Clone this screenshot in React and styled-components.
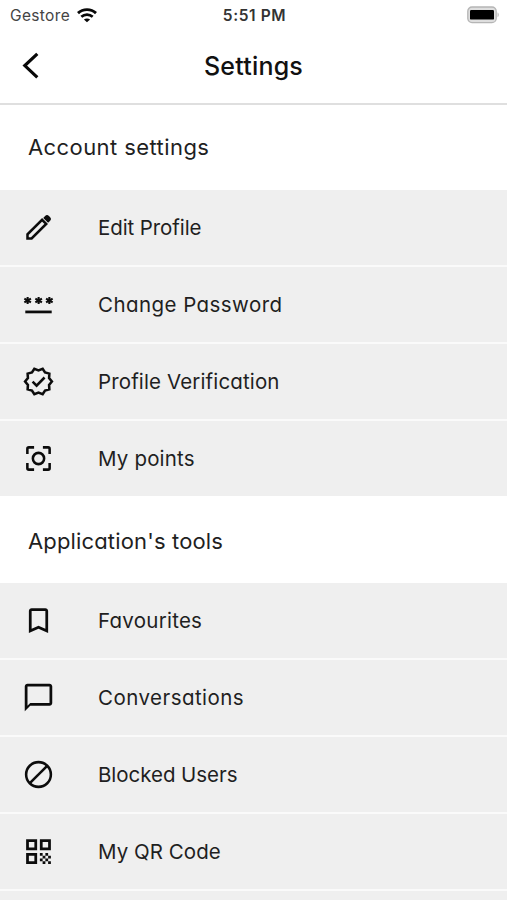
import React from "react";
import styled, { createGlobalStyle } from "styled-components";
import {
  MdBookmarkBorder,
  MdChatBubbleOutline,
  MdQrCode,
} from "react-icons/md";

const GlobalStyle = createGlobalStyle`
  * { box-sizing: border-box; }
  body {
    margin: 0;
    background: #fff;
    overflow: hidden;
  }
`;

const Screen = styled.main`
  width: 507px;
  height: 900px;
  overflow: hidden;
  display: flex;
  flex-direction: column;
  background: #fff;
  color: #1f1f1f;
  font-family: Inter, "Open Sans", sans-serif;
  font-feature-settings: "cv11";
`;

const StatusBar = styled.div`
  flex: none;
  height: 30px;
  padding: 0 8px 0 10px;
  display: grid;
  grid-template-columns: 1fr auto 1fr;
  align-items: center;
  font-size: 15.5px;
  font-feature-settings: normal;
`;

const Carrier = styled.div`
  display: flex;
  align-items: center;
  gap: 7px;
  color: #444;
  letter-spacing: 0.35px;
`;

const Clock = styled.div`
  color: #333;
  font-weight: 600;
  letter-spacing: 0.6px;
`;

const BatterySlot = styled.div`
  display: flex;
  justify-content: flex-end;
  padding-bottom: 1px;
`;

const Header = styled.header`
  flex: none;
  height: 75px;
  padding: 0 20px 2px;
  display: grid;
  grid-template-columns: 60px 1fr 60px;
  align-items: center;
  border-bottom: 2px solid #dfdfdf;
`;

const BackButton = styled.button`
  padding: 0;
  border: 0;
  background: none;
  display: flex;
`;

const Title = styled.h1`
  margin: 0;
  text-align: center;
  font-size: 25px;
  line-height: 36px;
  font-weight: 500;
  color: #111;
  letter-spacing: ${(p) => p.$track}px;
`;

const SectionTitle = styled.h2`
  flex: none;
  margin: 0;
  height: ${(p) => p.$height}px;
  padding: ${(p) => p.$top}px 28px 2px;
  display: flex;
  align-items: center;
  font-size: 22px;
  font-weight: 400;
  letter-spacing: ${(p) => p.$track}px;
`;

const List = styled.div`
  flex: none;
  display: flex;
  flex-direction: column;
  gap: 1.9px;
  background: #fafafa;
`;

const Row = styled.div`
  height: 75px;
  padding-left: 22px;
  display: grid;
  grid-template-columns: 76px 1fr;
  align-items: center;
  background: #efefef;
`;

const IconSlot = styled.span`
  display: flex;
  color: #0c0c0c;
`;

const Label = styled.span`
  padding-top: ${(p) => p.$drop}px;
  font-size: 20.5px;
  line-height: 30px;
  letter-spacing: ${(p) => p.$track}px;
`;

const Wifi = () => (
  <svg width="20" height="15" viewBox="0 0 20 15" fill="none" stroke="#080808">
    <path d="M1 5.1C6 .5 14 .5 19 5.1" strokeWidth="2.9" />
    <path d="M4.3 8.7c3.3-2.9 8.1-2.9 11.4 0" strokeWidth="2.7" />
    <path d="M10 14.3 6.9 11.5c1.7-1.5 4.5-1.5 6.2 0z" fill="#080808" stroke="none" />
  </svg>
);

const Battery = () => (
  <svg width="32" height="18" viewBox="0 0 32 18">
    <rect x="0.8" y="1" width="28.4" height="15.6" rx="4.2" fill="#dedede" stroke="#b5b5b5" strokeWidth="1.3" />
    <rect x="3" y="4" width="24" height="9.6" rx="1.2" fill="#000" />
    <path d="M30.6 6.6v4.6c1.4-.6 1.4-4 0-4.6z" fill="#aaa" />
  </svg>
);

const Back = () => (
  <svg width="22" height="30" viewBox="0 0 22 30" fill="none" stroke="#080808" strokeWidth="3.2">
    <path d="M17.3 2.8 4.8 14.6l12.5 11.8" />
  </svg>
);

const LineIcon = styled.svg.attrs({ width: 33, height: 33, viewBox: "0 0 24 24" })`
  fill: none;
  stroke: currentColor;
  stroke-width: 1.85;
`;

const Pencil = () => (
  <LineIcon>
    <path d="M4 20v-3L14.6 6.4l3 3L7 20z" />
    <path d="m16.1 5 1.2-1.2q.9-.9 1.8 0l1.1 1.1q.9.9 0 1.8L19 7.9z" fill="currentColor" strokeWidth="0.9" />
  </LineIcon>
);

const Blocked = () => (
  <LineIcon>
    <circle cx="12" cy="12" r="9" />
    <path d="M5.7 18.3 18.3 5.7" />
  </LineIcon>
);

const Password = () => (
  <LineIcon>
    {[4.1, 12.1, 19.9].map((x) => (
      <path
        key={x}
        strokeWidth="1.5"
        d={`M${x} 6.5v5.2M${x - 2.4} 7.7l4.8 2.8M${x - 2.4} 10.5l4.8-2.8`}
      />
    ))}
    <path d="M2.4 17.4h19.2" strokeWidth="2" />
  </LineIcon>
);

const POINTS = 10;
const badgeOutline = Array.from({ length: POINTS * 2 }, (_, i) => {
  const radius = i % 2 ? 8.1 : 9.75;
  const angle = (Math.PI * i) / POINTS;
  return `${(12 + radius * Math.cos(angle)).toFixed(2)},${(12 + radius * Math.sin(angle)).toFixed(2)}`;
}).join(" ");

const Verified = () => (
  <LineIcon>
    <polygon points={badgeOutline} />
    <path d="m7.7 12.1 2.9 2.9 5.8-5.9" />
  </LineIcon>
);

const Focus = () => (
  <LineIcon>
    <circle cx="12" cy="12" r="4.1" />
    <path d="M3.9 8.8V5q0-1.1 1.1-1.1h3.8M15.2 3.9H19q1.1 0 1.1 1.1v3.8M20.1 15.2V19q0 1.1-1.1 1.1h-3.8M8.8 20.1H5q-1.1 0-1.1-1.1v-3.8" />
  </LineIcon>
);

const account = [
  { label: "Edit Profile", icon: <Pencil />, track: -0.1 },
  { label: "Change Password", icon: <Password />, track: 0.44 },
  { label: "Profile Verification", icon: <Verified />, track: 0.13 },
  { label: "My points", icon: <Focus />, track: 0.17 },
];

const tools = [
  { label: "Favourites", icon: <MdBookmarkBorder size={33} />, track: 0.25 },
  { label: "Conversations", icon: <MdChatBubbleOutline size={33} />, track: 0.46 },
  { label: "Blocked Users", icon: <Blocked />, track: -0.04 },
  { label: "My QR Code", icon: <MdQrCode size={33} />, track: 0.05 },
];

const Rows = ({ items, drop, children }) => (
  <List>
    {items.map((item) => (
      <Row key={item.label}>
        <IconSlot>{item.icon}</IconSlot>
        <Label $track={item.track} $drop={drop}>{item.label}</Label>
      </Row>
    ))}
    {children}
  </List>
);

export default function App() {
  return (
    <Screen>
      <GlobalStyle />
      <StatusBar>
        <Carrier>
          Gestore <Wifi />
        </Carrier>
        <Clock>5:51 PM</Clock>
        <BatterySlot>
          <Battery />
        </BatterySlot>
      </StatusBar>
      <Header>
        <BackButton aria-label="Back">
          <Back />
        </BackButton>
        <Title $track={0.2}>Settings</Title>
      </Header>
      <SectionTitle $height={85} $top={0} $track={0.42}>Account settings</SectionTitle>
      <Rows items={account} drop={1} />
      <SectionTitle $height={87.3} $top={5} $track={0.15}>Application's tools</SectionTitle>
      <Rows items={tools} drop={2}>
        <Row />
      </Rows>
    </Screen>
  );
}
